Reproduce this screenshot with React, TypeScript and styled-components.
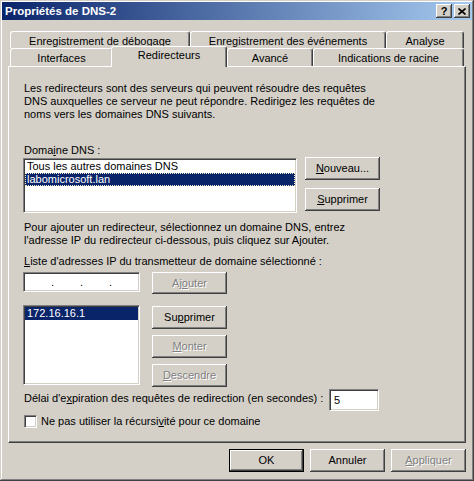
import styled, { createGlobalStyle, css } from "styled-components";

const FACE = "#d4d0c8";
const SHADOW = "#808080";
const DARK = "#404040";
const HILITE = "#ffffff";
const SELECT = "#0a246a";

const GlobalStyle = createGlobalStyle`
  * { box-sizing: border-box; }
  html, body { margin: 0; padding: 0; background: ${FACE}; }
  body {
    font-family: "Liberation Sans", Arial, sans-serif;
    font-size: 11px;
    line-height: 13px;
    color: #000;
  }
`;

const raised = css`
  background: ${FACE};
  box-shadow: inset -1px -1px ${DARK}, inset 1px 1px ${HILITE},
    inset -2px -2px ${SHADOW}, inset 2px 2px ${FACE};
`;

const sunken = css`
  background: #fff;
  border: 1px solid;
  border-color: ${SHADOW} ${HILITE} ${HILITE} ${SHADOW};
  box-shadow: inset 1px 1px ${DARK}, inset -1px -1px ${FACE};
`;

const Window = styled.div`
  width: 474px;
  height: 481px;
  padding: 2px;
  display: flex;
  flex-direction: column;
  background: ${FACE};
  box-shadow: inset -1px -1px ${DARK}, inset 1px 1px ${FACE},
    inset -2px -2px ${SHADOW}, inset 2px 2px ${HILITE};
`;

const TitleBar = styled.div`
  height: 18px;
  display: flex;
  align-items: center;
  padding: 0 2px 0 3px;
  background: linear-gradient(to right, ${SELECT}, #a6caf0);
`;

const Title = styled.div`
  flex: 1;
  color: #fff;
  font-weight: bold;
  font-size: 11.5px;
  white-space: nowrap;
`;

const CaptionButton = styled.div`
  ${raised};
  width: 16px;
  height: 14px;
  margin-left: 2px;
  display: flex;
  align-items: center;
  justify-content: center;
  font-weight: bold;
  font-size: 11px;
  line-height: 14px;
`;

const Body = styled.div`
  flex: 1;
  padding: 11px 6px 0 6px;
  display: flex;
  flex-direction: column;
`;

const TabStrip = styled.div`
  display: flex;
  flex-direction: column;
  padding-left: 2px;
`;

const TabRow = styled.div<{ $h: number }>`
  display: flex;
  height: ${(p) => p.$h}px;
`;

const Tab = styled.div<{ $w: number; $active?: boolean }>`
  width: ${(p) => p.$w}px;
  height: 100%;
  flex: none;
  background: ${FACE};
  border: 1px solid;
  border-color: ${HILITE} ${DARK} transparent ${HILITE};
  border-bottom: none;
  border-radius: 3px 3px 0 0;
  box-shadow: inset -1px 0 ${SHADOW};
  padding-top: 3px;
  text-align: center;
  white-space: nowrap;

  ${(p) =>
    p.$active &&
    css`
      position: relative;
      z-index: 2;
      margin-top: -2px;
      margin-left: -2px;
      height: calc(100% + 3px);
      padding-top: 2px;
    `}
`;

const Panel = styled.div`
  height: 377px;
  border: 1px solid;
  border-color: ${HILITE} ${DARK} ${DARK} ${HILITE};
  box-shadow: inset -1px -1px ${SHADOW};
  padding: 15px 0 0 14px;
  display: flex;
  flex-direction: column;
`;

const Text = styled.div<{ $mt?: number }>`
  margin-top: ${(p) => p.$mt ?? 0}px;
  padding-left: 1px;
  white-space: nowrap;
`;

const Row = styled.div<{ $mt?: number }>`
  display: flex;
  align-items: flex-start;
  margin-top: ${(p) => p.$mt ?? 0}px;
`;

const ListBox = styled.div<{ $w: number; $h: number; $mt?: number }>`
  ${sunken};
  width: ${(p) => p.$w}px;
  height: ${(p) => p.$h}px;
  margin-top: ${(p) => p.$mt ?? 0}px;
  padding: 1px;
`;

const ListItem = styled.div<{ $selected?: boolean; $focus?: boolean }>`
  height: 13px;
  padding-left: 2px;
  white-space: nowrap;
  ${(p) =>
    p.$selected &&
    css`
      background: ${SELECT};
      color: #fff;
    `}
  ${(p) =>
    p.$focus &&
    css`
      outline: 1px dotted #f2f0d0;
      outline-offset: -1px;
    `}
`;

const ButtonColumn = styled.div<{ $ml: number; $gap: number; $mt?: number }>`
  display: flex;
  flex-direction: column;
  gap: ${(p) => p.$gap}px;
  margin-left: ${(p) => p.$ml}px;
  margin-top: ${(p) => p.$mt ?? 0}px;
`;

const Button = styled.button<{ $default?: boolean; $h?: number; $ml?: number }>`
  ${raised};
  width: 75px;
  height: ${(p) => p.$h ?? 23}px;
  margin: 0 0 0 ${(p) => p.$ml ?? 0}px;
  padding: 0;
  border: ${(p) => (p.$default ? "1px solid #000" : "none")};
  font: inherit;
  color: #000;
  display: flex;
  align-items: center;
  justify-content: center;

  &:disabled {
    color: ${SHADOW};
    text-shadow: 1px 1px #fff;
  }
`;

const Key = styled.span`
  text-decoration: underline;
  text-underline-offset: 1px;
`;

const IpBox = styled.div`
  ${sunken};
  width: 117px;
  height: 20px;
  padding: 0 1px;
  display: flex;
  align-items: center;
`;

const IpPart = styled.span`
  width: 28px;
`;

const IpDot = styled.span`
  width: 3px;
  text-align: center;
`;

const TimeoutLabel = styled.div`
  flex: 0 0 306px;
  padding: 3px 0 0 1px;
  white-space: nowrap;
`;

const NumberBox = styled.div`
  ${sunken};
  width: 50px;
  height: 22px;
  padding-left: 4px;
  line-height: 20px;
`;

const CheckRow = styled.div`
  display: flex;
  align-items: center;
  margin-top: 4px;
`;

const CheckBox = styled.div`
  ${sunken};
  width: 13px;
  height: 13px;
  margin: 0 4px 0 1px;
`;

const Footer = styled.div`
  display: flex;
  justify-content: flex-end;
  gap: 6px;
  margin-top: 6px;
`;

export default function App() {
  return (
    <>
      <GlobalStyle />
      <Window>
        <TitleBar>
          <Title>Propriétés de DNS-2</Title>
          <CaptionButton>?</CaptionButton>
          <CaptionButton>
            <svg width="8" height="7" viewBox="0 0 8 7">
              <path d="M0.5 0.5 L7.5 6.5 M7.5 0.5 L0.5 6.5" stroke="#000" strokeWidth="1.6" />
            </svg>
          </CaptionButton>
        </TitleBar>
        <Body>
          <TabStrip>
            <TabRow $h={17}>
              <Tab $w={180}>Enregistrement de débogage</Tab>
              <Tab $w={196}>Enregistrement des événements</Tab>
              <Tab $w={78}>Analyse</Tab>
            </TabRow>
            <TabRow $h={18}>
              <Tab $w={103}>Interfaces</Tab>
              <Tab $w={116} $active>
                Redirecteurs
              </Tab>
              <Tab $w={86}>Avancé</Tab>
              <Tab $w={151}>Indications de racine</Tab>
            </TabRow>
          </TabStrip>
          <Panel>
            <Text>
              Les redirecteurs sont des serveurs qui peuvent résoudre des requêtes
              <br />
              DNS auxquelles ce serveur ne peut répondre. Redirigez les requêtes de
              <br />
              noms vers les domaines DNS suivants.
            </Text>
            <Text $mt={23}>
              Doma<Key>i</Key>ne DNS :
            </Text>
            <Row>
              <ListBox $w={274} $h={55} $mt={1}>
                <ListItem>Tous les autres domaines DNS</ListItem>
                <ListItem $selected $focus>
                  labomicrosoft.lan
                </ListItem>
              </ListBox>
              <ButtonColumn $ml={8} $gap={8}>
                <Button>
                  <Key>N</Key>ouveau...
                </Button>
                <Button>
                  <Key>S</Key>upprimer
                </Button>
              </ButtonColumn>
            </Row>
            <Text $mt={8}>
              Pour ajouter un redirecteur, sélectionnez un domaine DNS, entrez
              <br />
              l'adresse IP du redirecteur ci-dessous, puis cliquez sur Ajouter.
            </Text>
            <Text $mt={8}>
              <Key>L</Key>iste d'adresses IP du transmetteur de domaine sélectionné :
            </Text>
            <Row $mt={4}>
              <IpBox>
                <IpPart />
                <IpDot>.</IpDot>
                <IpPart />
                <IpDot>.</IpDot>
                <IpPart />
                <IpDot>.</IpDot>
                <IpPart />
              </IpBox>
              <Button $h={22} $ml={12} disabled>
                Aj<Key>o</Key>uter
              </Button>
            </Row>
            <Row $mt={11}>
              <ListBox $w={117} $h={80}>
                <ListItem $selected>172.16.16.1</ListItem>
              </ListBox>
              <ButtonColumn $ml={12} $gap={6} $mt={1}>
                <Button>
                  Su<Key>p</Key>primer
                </Button>
                <Button disabled>
                  <Key>M</Key>onter
                </Button>
                <Button disabled>
                  <Key>D</Key>escendre
                </Button>
              </ButtonColumn>
            </Row>
            <Row $mt={2}>
              <TimeoutLabel>
                Délai d'e<Key>x</Key>piration des requêtes de redirection (en secondes) :
              </TimeoutLabel>
              <NumberBox>5</NumberBox>
            </Row>
            <CheckRow>
              <CheckBox />
              <span>
                Ne pas utiliser la récursi<Key>v</Key>ité pour ce domaine
              </span>
            </CheckRow>
          </Panel>
          <Footer>
            <Button $default>OK</Button>
            <Button>Annuler</Button>
            <Button disabled>
              <Key>A</Key>ppliquer
            </Button>
          </Footer>
        </Body>
      </Window>
    </>
  );
}
